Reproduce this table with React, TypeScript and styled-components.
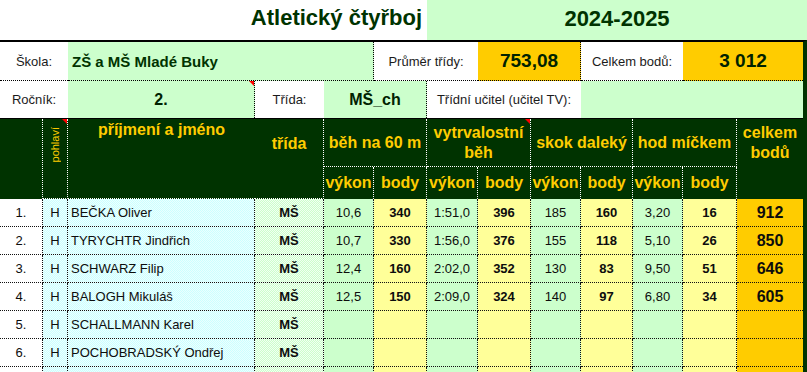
import styled, { createGlobalStyle } from 'styled-components';

const COLS = '43px 25px 187px 69px 50px 53px 51px 53px 50px 52px 50px 54px 66px';

type Fill = 'plain' | 'cyan' | 'mint' | 'green' | 'cream' | 'gold';

const fills: Record<Fill, string> = {
  plain: '#ffffff',
  cyan: 'repeating-conic-gradient(#ccffff 0 25%, #ebffff 0 50%) 0 0 / 2px 2px',
  mint: 'repeating-conic-gradient(#ccffcc 0 25%, #f2fff2 0 50%) 0 0 / 2px 2px',
  green: '#ccffcc',
  cream: '#ffff99',
  gold: '#ffcc00',
};

interface Result {
  name: string;
  run?: string;
  runPts?: number;
  endurance?: string;
  endurancePts?: number;
  jump?: string;
  jumpPts?: number;
  toss?: string;
  tossPts?: number;
  total?: number;
}

const results: Result[] = [
  { name: 'BEČKA Oliver', run: '10,6', runPts: 340, endurance: '1:51,0', endurancePts: 396, jump: '185', jumpPts: 160, toss: '3,20', tossPts: 16, total: 912 },
  { name: 'TYRYCHTR Jindřich', run: '10,7', runPts: 330, endurance: '1:56,0', endurancePts: 376, jump: '155', jumpPts: 118, toss: '5,10', tossPts: 26, total: 850 },
  { name: 'SCHWARZ Filip', run: '12,4', runPts: 160, endurance: '2:02,0', endurancePts: 352, jump: '130', jumpPts: 83, toss: '9,50', tossPts: 51, total: 646 },
  { name: 'BALOGH Mikuláš', run: '12,5', runPts: 150, endurance: '2:09,0', endurancePts: 324, jump: '140', jumpPts: 97, toss: '6,80', tossPts: 34, total: 605 },
  { name: 'SCHALLMANN Karel' },
  { name: 'POCHOBRADSKÝ Ondřej' },
];

const GlobalStyle = createGlobalStyle`
  html, body {
    margin: 0;
    padding: 0;
    background: #fff;
  }
  body {
    font-family: 'Liberation Sans', Arial, sans-serif;
    overflow: hidden;
  }
`;

const Sheet = styled.div`
  width: 807px;
  height: 372px;
  overflow: hidden;
  background: #fff;
`;

const TitleRow = styled.div`
  display: grid;
  grid-template-columns: 427px 1fr;
  height: 40px;
  font-size: 22px;
  font-weight: bold;
  color: #003300;
`;

const TitleCell = styled.div`
  display: flex;
  align-items: center;
  justify-content: flex-end;
  padding: 0 5px 4px 0;
  background: #fff;
`;

const YearCell = styled.div`
  display: flex;
  align-items: center;
  justify-content: center;
  padding-bottom: 2px;
  background: #ccffcc;
`;

const Frame = styled.div`
  width: 803px;
  border-top: 2px solid #000;
  border-right: 4px solid #003300;
`;

const InfoGrid = styled.div`
  display: grid;
  grid-template-columns: ${COLS};
  grid-template-rows: 39px 37px;
`;

const InfoCell = styled.div<{ $span: number; $fill?: Fill; $line?: boolean; $top?: boolean; $left?: boolean }>`
  grid-column: span ${(p) => p.$span};
  position: relative;
  box-sizing: border-box;
  display: flex;
  align-items: center;
  justify-content: ${(p) => (p.$left ? 'flex-start' : 'center')};
  padding-left: ${(p) => (p.$left ? '4px' : '0')};
  background: ${(p) => fills[p.$fill ?? 'plain']};
  border-right: ${(p) => (p.$line ? '1px dotted #000' : 'none')};
  border-bottom: ${(p) => (p.$top ? '1px dotted #000' : 'none')};
  font-size: 13px;
  color: #1b1b1b;
`;

const SchoolName = styled.span`
  font-size: 15px;
  font-weight: bold;
  color: #003300;
`;

const BigValue = styled.span`
  font-size: 19px;
  font-weight: bold;
  color: #002200;
`;

const ClassValue = styled.span`
  font-size: 16px;
  font-weight: bold;
  color: #002200;
`;

const Note = styled.span`
  position: absolute;
  top: 0;
  right: 0;
  width: 0;
  height: 0;
  border-top: 5px solid #ff0000;
  border-left: 5px solid transparent;
`;

const HeadGrid = styled.div`
  display: grid;
  grid-template-columns: ${COLS};
  grid-template-rows: 48px 32px;
  background: #003300;
  border-top: 1px solid #000;
  color: #ffcc00;
  font-size: 16px;
  font-weight: bold;
`;

const HeadCell = styled.div<{ $span?: number; $tall?: boolean; $line?: boolean; $under?: boolean; $top?: number }>`
  grid-column: span ${(p) => p.$span ?? 1};
  grid-row: span ${(p) => (p.$tall ? 2 : 1)};
  position: relative;
  box-sizing: border-box;
  display: flex;
  align-items: ${(p) => (p.$top !== undefined ? 'flex-start' : 'center')};
  justify-content: center;
  padding-top: ${(p) => p.$top ?? 0}px;
  text-align: center;
  line-height: 20px;
  border-right: ${(p) => (p.$line ? '1px dotted #fff' : 'none')};
  border-bottom: ${(p) => (p.$under ? '1px dotted #fff' : 'none')};
`;

const Vertical = styled.span`
  writing-mode: vertical-rl;
  transform: rotate(180deg);
  font-size: 11px;
  font-weight: normal;
  line-height: 12px;
`;

const Row = styled.div`
  display: grid;
  grid-template-columns: ${COLS};
  height: 28px;
`;

const Cell = styled.div<{ $fill: Fill; $bold?: boolean; $left?: boolean; $total?: boolean }>`
  box-sizing: border-box;
  display: flex;
  align-items: center;
  justify-content: ${(p) => (p.$left ? 'flex-start' : 'center')};
  padding-left: ${(p) => (p.$left ? '3px' : '0')};
  background: ${(p) => fills[p.$fill]};
  border-right: ${(p) => (p.$total ? 'none' : '1px dotted #111')};
  border-bottom: 1px dotted #111;
  font-size: ${(p) => (p.$total ? '16px' : '13px')};
  font-weight: ${(p) => (p.$bold || p.$total ? 'bold' : 'normal')};
  color: #0d0d0d;
  white-space: nowrap;
`;

const fillOrder: Fill[] = ['plain', 'cyan', 'cyan', 'mint', 'green', 'cream', 'green', 'cream', 'green', 'cream', 'green', 'cream', 'gold'];

export default function App() {
  return (
    <Sheet>
      <GlobalStyle />
      <TitleRow>
        <TitleCell>Atletický čtyřboj</TitleCell>
        <YearCell>2024-2025</YearCell>
      </TitleRow>
      <Frame>
        <InfoGrid>
          <InfoCell $span={2} $top>Škola:</InfoCell>
          <InfoCell $span={3} $fill="green" $line $top $left>
            <SchoolName>ZŠ a MŠ Mladé Buky</SchoolName>
          </InfoCell>
          <InfoCell $span={2} $top>Průměr třídy:</InfoCell>
          <InfoCell $span={2} $fill="gold" $line $top>
            <BigValue>753,08</BigValue>
          </InfoCell>
          <InfoCell $span={2} $top>Celkem bodů:</InfoCell>
          <InfoCell $span={2} $fill="gold" $top>
            <BigValue>3 012</BigValue>
          </InfoCell>

          <InfoCell $span={2}>Ročník:</InfoCell>
          <InfoCell $span={1} $fill="green" $line>
            <ClassValue>2.</ClassValue>
            <Note />
          </InfoCell>
          <InfoCell $span={1}>Třída:</InfoCell>
          <InfoCell $span={2} $fill="green" $line>
            <ClassValue>MŠ_ch</ClassValue>
          </InfoCell>
          <InfoCell $span={3}>Třídní učitel (učitel TV):</InfoCell>
          <InfoCell $span={4} $fill="green" />
        </InfoGrid>

        <HeadGrid>
          <HeadCell $tall $line />
          <HeadCell $tall $line $under $top={8}>
            <Vertical>pohlaví</Vertical>
            <Note />
          </HeadCell>
          <HeadCell $tall $under $top={1}>příjmení a jméno</HeadCell>
          <HeadCell $tall $line $under $top={15}>třída</HeadCell>
          <HeadCell $span={2} $line $under>běh na 60 m</HeadCell>
          <HeadCell $span={2} $line $under>
            vytrvalostní
            <br />
            běh
            <Note />
          </HeadCell>
          <HeadCell $span={2} $line $under>skok daleký</HeadCell>
          <HeadCell $span={2} $line $under>hod míčkem</HeadCell>
          <HeadCell $tall $top={4}>
            celkem
            <br />
            bodů
          </HeadCell>
          {Array.from({ length: 4 }).flatMap((_, i) => [
            <HeadCell key={`v${i}`} $line>výkon</HeadCell>,
            <HeadCell key={`b${i}`} $line>body</HeadCell>,
          ])}
        </HeadGrid>

        {results.map((r, i) => (
          <Row key={i}>
            <Cell $fill="plain">{i + 1}.</Cell>
            <Cell $fill="cyan">H</Cell>
            <Cell $fill="cyan" $left>{r.name}</Cell>
            <Cell $fill="mint" $bold>MŠ</Cell>
            <Cell $fill="green">{r.run}</Cell>
            <Cell $fill="cream" $bold>{r.runPts}</Cell>
            <Cell $fill="green">{r.endurance}</Cell>
            <Cell $fill="cream" $bold>{r.endurancePts}</Cell>
            <Cell $fill="green">{r.jump}</Cell>
            <Cell $fill="cream" $bold>{r.jumpPts}</Cell>
            <Cell $fill="green">{r.toss}</Cell>
            <Cell $fill="cream" $bold>{r.tossPts}</Cell>
            <Cell $fill="gold" $total>{r.total}</Cell>
          </Row>
        ))}
        <Row>
          {fillOrder.map((f, i) => (
            <Cell key={i} $fill={f} $total={i === 12} />
          ))}
        </Row>
      </Frame>
    </Sheet>
  );
}
